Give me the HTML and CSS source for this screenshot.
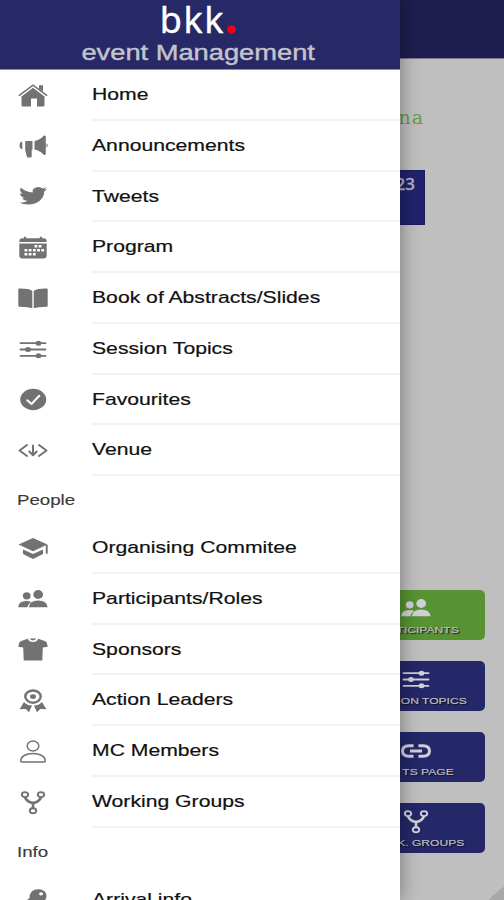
FILE: index.html
```html
<!DOCTYPE html>
<html lang="en">
<head>
    <meta charset="UTF-8">
    <meta name="viewport" content="width=device-width, initial-scale=1.0">
    <title>bkk. event Management</title>
    <link rel="stylesheet" href="styles.css">
</head>
<body>
    <!-- icon set -->
    <svg class="sprite" xmlns="http://www.w3.org/2000/svg">
        <symbol id="home" viewBox="0 0 32 26">
            <path d="M4.500 13.500 16 4.800l11.500 8.700V22q0 1.500-1.500 1.500h-6V15.500h-6v8H6q-1.500 0-1.500-1.500z"/>
            <path d="M2.300 12.300 16 2.200l13.700 10.100" fill="none" stroke="currentColor" stroke-width="1.500" stroke-linecap="round"/>
            <path d="M22 2.300h4v6.500l-4-3z"/>
        </symbol>
        <symbol id="megaphone" viewBox="0 0 32 26">
            <path d="M5.300 7.500v7.800C3.500 14.800 2.500 13.600 2.500 11.400s1-3.400 2.800-3.900zM8.200 7h7.300v8.800h-.8v6.400q0 1.300-1.300 1.300h-2.300q-1.300 0-1.300-1.300L8.200 16zM17.500 7q6-1.400 8.800-5 .5-.6 1.500-.4 1 .3 1 1.200v17q0 1-1 1.200-1 .2-1.500-.4-2.800-3.600-8.800-5zM29.500 9.300q1.200.8 1.200 2.100t-1.200 2.100z"/>
        </symbol>
        <symbol id="twitter" viewBox="0 0 32 26">
            <path transform="translate(2 1) scale(1.170 .900)" d="M23.950 4.570a10 10 0 0 1-2.820.770 4.960 4.960 0 0 0 2.160-2.720c-.950.550-2 .950-3.130 1.180a4.920 4.920 0 0 0-8.380 4.480C7.690 8.100 4.070 6.130 1.640 3.160a4.820 4.820 0 0 0-.670 2.480c0 1.700.870 3.210 2.190 4.100a4.900 4.900 0 0 1-2.230-.620v.060a4.920 4.920 0 0 0 3.950 4.830 5 5 0 0 1-2.210.080 4.940 4.940 0 0 0 4.600 3.420A9.870 9.870 0 0 1 0 19.540a13.990 13.990 0 0 0 7.550 2.210c9.050 0 14-7.500 14-13.980 0-.210 0-.420-.020-.630a9.940 9.940 0 0 0 2.460-2.550z"/>
        </symbol>
        <symbol id="calendar" viewBox="0 0 32 26">
            <path d="M2.300 6.500Q2.300 3.300 5.500 3.300H7V1.800h2.200v1.500h13.600V1.800H25v1.500h1.500q3.200 0 3.200 3.200V7H2.300z"/>
            <path fill-rule="evenodd" d="M2.300 8.500h27.400v11.800q0 3.200-3.200 3.200h-21q-3.200 0-3.200-3.200zM17.500 10v2.600h2.800V10zm4.200 0v2.600h2.800V10zM7.500 14v2.600h2.800V14zm4.200 0v2.600h2.800V14zm4.200 0v2.600h2.800V14zm4.200 0v2.600h2.800V14zm4.200 0v2.600h2.800V14zM7.500 18v2.600h2.800V18zm4.200 0v2.600h2.800V18zm4.200 0v2.600h2.800V18z"/>
        </symbol>
        <symbol id="book" viewBox="0 0 32 26">
            <path d="M1.300 3.500Q1.300 2.600 2.200 2.600 11.500 2.400 15.300 5v17.300Q11.500 20.800 2.200 20.700q-.9 0-.9-.9zM30.700 3.500q0-.9-.9-.9Q20.500 2.400 16.700 5v17.300q3.800-1.500 13.100-1.600.9 0 .9-.9z"/>
        </symbol>
        <symbol id="options" viewBox="0 0 32 26">
            <path d="M3.500 6.200h25M3.500 12.500h25M3.500 18.800h25" fill="none" stroke="currentColor" stroke-width="1.800" stroke-linecap="round"/>
            <ellipse cx="21.500" cy="6.200" rx="2.900" ry="2.500"/>
            <ellipse cx="11" cy="12.500" rx="2.900" ry="2.500"/>
            <ellipse cx="21.500" cy="18.800" rx="2.900" ry="2.500"/>
        </symbol>
        <symbol id="check" viewBox="0 0 32 26">
            <ellipse cx="16.200" cy="12.500" rx="13" ry="10.700"/>
            <path class="cut" d="m10.300 13.300 4.200 3.700 7.800-8.300"/>
        </symbol>
        <symbol id="venue" viewBox="0 0 32 26">
            <path d="M10 7 2.500 12.500 10 18M22 7l7.500 5.500L22 18M16 7.500v9.300M12.300 13.500l3.700 3.700 3.700-3.700" fill="none" stroke="currentColor" stroke-width="2" stroke-linecap="round" stroke-linejoin="round"/>
        </symbol>
        <symbol id="school" viewBox="0 0 32 26">
            <path d="M1.500 8.600 16 2l14.500 6.600L16 15.300z"/>
            <path d="M6 13.400l10 4.700 10-4.700v4.700l-10 5-10-5zM28.800 9h1.900v8q0 .9-.9.900t-1-.9z"/>
        </symbol>
        <symbol id="people" viewBox="0 0 32 26">
            <ellipse cx="9.700" cy="8.800" rx="3.900" ry="3.600"/>
            <ellipse cx="21.200" cy="7.500" rx="4.900" ry="4.400"/>
            <path d="M1.300 20.300q0-6.200 8.400-6.200 3 0 4.500.9-3.300 1.800-4 5.300zM11.800 20.300q.6-6.800 9.400-6.800t9.500 6.800z"/>
        </symbol>
        <symbol id="shirt" viewBox="0 0 32 26">
            <path d="M10.700 1.700q1.600 3.300 5.300 3.300t5.300-3.300L27.800 4q1.500.5 2 1.800l1 4-5 .6-.5 13.100H6.700l-.5-13.100-5-.6 1-4Q2.700 4.500 4.200 4zM12.600 1.600h6.800q-1 1.800-3.400 1.800t-3.400-1.800z"/>
        </symbol>
        <symbol id="ribbon" viewBox="0 0 32 26">
            <ellipse cx="16" cy="8.600" rx="7.700" ry="6.100" fill="none" stroke="currentColor" stroke-width="2.400"/>
            <ellipse cx="16" cy="8.600" rx="3" ry="2.400"/>
            <path d="M7 14q3.200 3.600 8 3.600L12 24.300l-3.200-3.200-6.200.1zM25 14q-3.200 3.600-8 3.600l3 6.700 3.200-3.200 6.200.1z"/>
        </symbol>
        <symbol id="person" viewBox="0 0 32 26">
            <g fill="none" stroke="currentColor" stroke-width="1.500">
                <ellipse cx="16" cy="7" rx="5.800" ry="4.900"/>
                <path d="M3.800 22.200c-.4-5 5.700-7.600 12.200-7.600s12.600 2.600 12.200 7.600q-.1.900-1.200.9H5q-1.100 0-1.200-.9z"/>
            </g>
        </symbol>
        <symbol id="fork" viewBox="0 0 32 26">
            <g fill="none" stroke="currentColor" stroke-width="1.900">
                <ellipse cx="8" cy="4.600" rx="3.200" ry="2.500"/>
                <ellipse cx="24" cy="4.600" rx="3.200" ry="2.500"/>
                <ellipse cx="16" cy="20.800" rx="3.200" ry="2.500"/>
                <path d="M8 7q.5 2.500 3.300 4.300 2.400 1.500 4.700 1.500t4.700-1.500Q23.500 9.500 24 7M16 12.800v5.500" stroke-width="2.700"/>
            </g>
        </symbol>
        <symbol id="link" viewBox="0 0 32 26">
            <path d="M13.500 7.800H9q-6.500.3-6.500 5.200T9 18.200h4.500M18.500 7.800H23q6.500.3 6.500 5.200T23 18.200h-4.500M10 13h12" fill="none" stroke="currentColor" stroke-width="3"/>
        </symbol>
        <symbol id="key" viewBox="0 0 32 26">
            <path fill-rule="evenodd" d="M21 2.200c5 0 8.500 2.700 8.500 6.700s-3.500 7-8.500 7l-3 .1-7 8H3v-5l9.500-8c-.4-5 3.500-8.800 8.500-8.800zm3 3a2 1.600 0 1 0 .1 3.200 2 1.600 0 0 0-.1-3.200z"/>
        </symbol>
    </svg>

    <!-- page behind the menu -->
    <div class="page">
        <div class="topbar"></div>
        <h1 class="city">Vienna</h1>
        <div class="date"><span>2023</span></div>
        <div class="tiles">
            <div class="tile green"><svg><use href="#people"/></svg><span>PARTICIPANTS</span></div>
            <div class="tile"><svg><use href="#options"/></svg><span>SESSION TOPICS</span></div>
            <div class="tile"><svg><use href="#link"/></svg><span>CA. TS PAGE</span></div>
            <div class="tile"><svg><use href="#fork"/></svg><span>WORK. GROUPS</span></div>
        </div>
        <div class="corner"></div>
    </div>

    <!-- side menu -->
    <div class="menu">
        <div class="menu-head">
            <div class="logo">bkk<b>.</b></div>
            <div class="subtitle"><span>event Management</span></div>
        </div>
        <ul>
            <li><svg><use href="#home"/></svg><div><span>Home</span></div></li>
            <li><svg><use href="#megaphone"/></svg><div><span>Announcements</span></div></li>
            <li><svg><use href="#twitter"/></svg><div><span>Tweets</span></div></li>
            <li><svg><use href="#calendar"/></svg><div><span>Program</span></div></li>
            <li><svg><use href="#book"/></svg><div><span>Book of Abstracts/Slides</span></div></li>
            <li><svg><use href="#options"/></svg><div><span>Session Topics</span></div></li>
            <li><svg><use href="#check"/></svg><div><span>Favourites</span></div></li>
            <li><svg><use href="#venue"/></svg><div><span>Venue</span></div></li>
        </ul>
        <h2><span>People</span></h2>
        <ul>
            <li><svg><use href="#school"/></svg><div><span>Organising Commitee</span></div></li>
            <li><svg><use href="#people"/></svg><div><span>Participants/Roles</span></div></li>
            <li><svg><use href="#shirt"/></svg><div><span>Sponsors</span></div></li>
            <li><svg><use href="#ribbon"/></svg><div><span>Action Leaders</span></div></li>
            <li><svg><use href="#person"/></svg><div><span>MC Members</span></div></li>
            <li><svg><use href="#fork"/></svg><div><span>Working Groups</span></div></li>
        </ul>
        <h2><span>Info</span></h2>
        <ul>
            <li><svg><use href="#key"/></svg><div><span>Arrival info</span></div></li>
        </ul>
    </div>
</body>
</html>
```
FILE: styles.css
```css
*{
    margin: 0;
    padding: 0;
    box-sizing: border-box;
}
html,body{
    width: 100%;
    height: 100%;
    overflow: hidden;
}
body{
    position: relative;
    font-family: "Liberation Sans", Arial, sans-serif;
}
ul{
    list-style: none;
}
svg{
    display: block;
    flex: none;
    width: 32px;
    height: 26px;
    fill: currentColor;
}
.sprite{
    position: absolute;
    width: 0;
    height: 0;
}
.cut{
    fill: none;
    stroke: #fff;
    stroke-width: 2;
    stroke-linecap: round;
    stroke-linejoin: round;
}

/* page */
.page{
    display: flex;
    flex-direction: column;
    align-items: flex-end;
    height: 900px;
    background: #bfbfbf;
}
.topbar{
    width: 100%;
    height: 59px;
    background: #1e1e50;
    border-bottom: 1px solid #77778f;
}
.city{
    margin-top: 44px;
    padding-right: 80px;
    height: 28px;
    line-height: 28px;
    font-family: "DejaVu Serif", serif;
    font-size: 19px;
    font-weight: 400;
    letter-spacing: 1px;
    color: #659b4e;
}
.date{
    margin: 39px 79px 0 0;
    width: 240px;
    height: 55px;
    padding: 2px 9px 0 0;
    text-align: right;
    background: #20236c;
    border: 1px solid #1a1c5c;
    font-family: "Noto Sans", sans-serif;
    font-size: 17px;
    font-weight: 500;
    line-height: 22px;
    color: #b4b5c8;
    -webkit-text-stroke: .3px #b4b5c8;
}
.tiles{
    display: flex;
    flex-direction: column;
    gap: 21px;
    margin: 365px 19px 0 0;
}
.tile{
    display: flex;
    flex-direction: column;
    align-items: center;
    width: 138px;
    height: 50px;
    padding-top: 6px;
    border-radius: 5px;
    background: #242768;
    color: #cfcfd6;
}
.tile.green{
    background: #579233;
}
.tile span{
    margin-top: 1px;
    font-size: 9.500px;
    line-height: 13px;
    white-space: nowrap;
    color: #bcbcc6;
    transform: scaleX(1.270);
    -webkit-text-stroke: .2px #bcbcc6;
    text-shadow: 1px 1px 1px #111;
}
.corner{
    width: 16px;
    height: 14px;
    margin-top: auto;
    background: linear-gradient(139deg, transparent 50%, #a9a9a9 51%);
}

/* menu */
.menu{
    position: absolute;
    top: 0;
    left: 0;
    width: 399.500px;
    height: 900px;
    overflow: hidden;
    background: #fff;
    box-shadow: 0 0 18px rgba(0,0,0,.4);
}
.menu-head{
    height: 70px;
    background: #272967;
    border-bottom: 1px solid #8d8ea9;
    text-align: center;
}
.logo{
    height: 38px;
    padding-right: 3px;
    font-family: "Noto Sans", sans-serif;
    font-size: 36px;
    line-height: 40px;
    letter-spacing: 1.500px;
    color: #fff;
    -webkit-text-stroke: .4px #fff;
}
.logo b{
    font-size: 42px;
    line-height: 30px;
    letter-spacing: 0;
    color: #f00012;
    -webkit-text-stroke: 1px #f00012;
}
.subtitle{
    padding-right: 4px;
    font-size: 22px;
    line-height: 29px;
    color: #c4c4cc;
    -webkit-text-stroke: .4px #c4c4cc;
}
.subtitle span{
    display: inline-block;
    transform: scaleX(1.240);
}
.menu li{
    display: flex;
    align-items: center;
    height: 50.750px;
    padding-left: 17px;
    color: #727272;
}
.menu li svg{
    margin-top: 1px;
}
.menu li div{
    flex: 1;
    height: 100%;
    margin-left: 43px;
    border-bottom: 2px solid #f2f2f2;
    font-size: 17px;
    line-height: 50px;
    color: #111;
    -webkit-text-stroke: .2px #111;
}
.menu li span,
.menu h2 span{
    display: inline-block;
    white-space: nowrap;
    transform: scaleX(1.245);
    transform-origin: left;
}
.menu h2{
    height: 47px;
    padding-left: 17px;
    font-size: 15px;
    font-weight: 400;
    line-height: 47px;
    color: #3a3a3a;
    -webkit-text-stroke: .15px #3a3a3a;
}
```
